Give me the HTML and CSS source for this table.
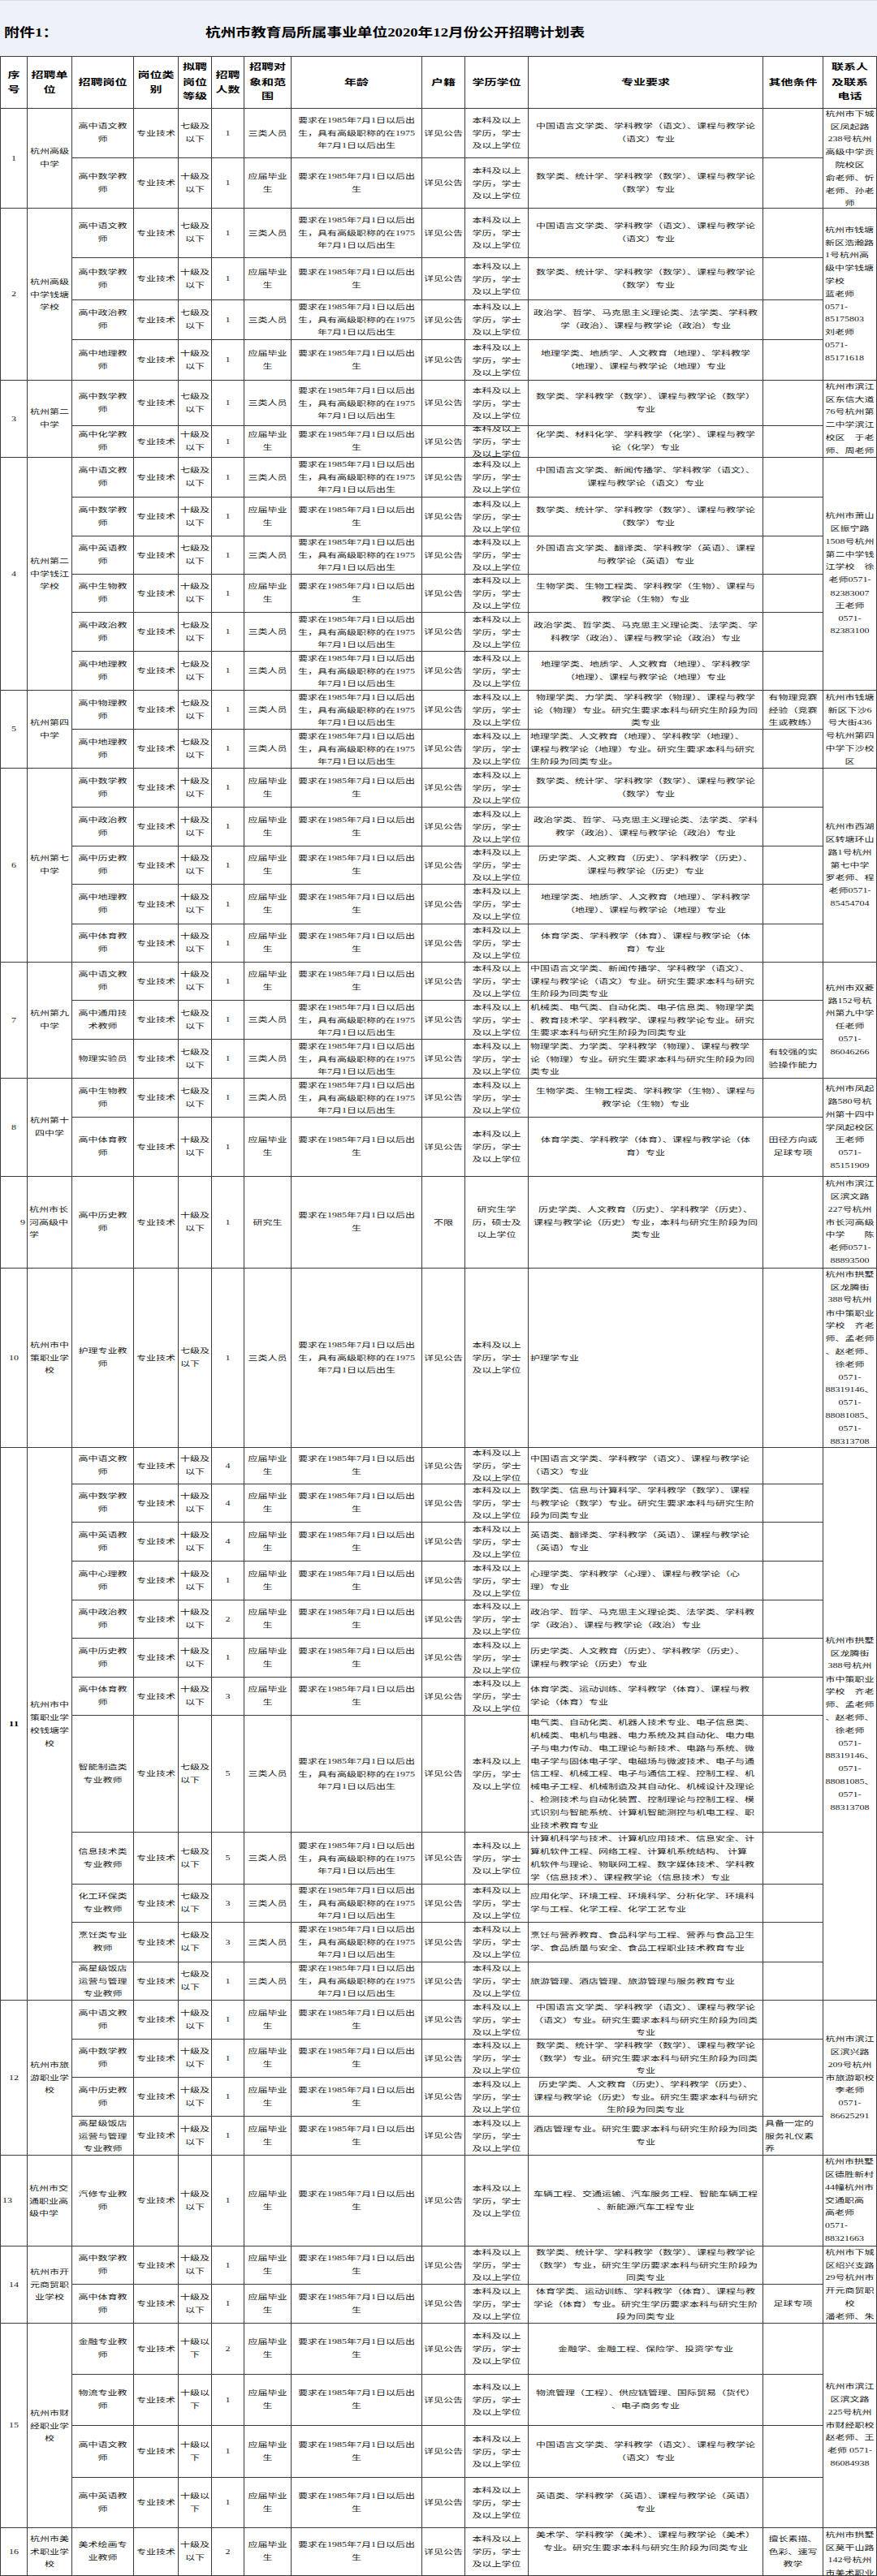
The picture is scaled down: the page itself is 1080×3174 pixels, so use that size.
FILE: index.html
```html
<!DOCTYPE html>
<html lang="zh-CN">
<head>
<meta charset="utf-8">
<title>杭州市教育局所属事业单位2020年12月份公开招聘计划表</title>
<link rel="stylesheet" href="styles.css">
</head>
<body>
<div class="page">
<div class="top"><span class="fj">附件1：</span><span class="ttl">杭州市教育局所属事业单位2020年12月份公开招聘计划表</span></div>
<div class="grid">
<div class="c hd"><span>序<br>号</span></div>
<div class="c hd"><span>招聘单<br>位</span></div>
<div class="c hd"><span>招聘岗位</span></div>
<div class="c hd"><span>岗位类<br>别</span></div>
<div class="c hd"><span>拟聘<br>岗位<br>等级</span></div>
<div class="c hd"><span>招聘<br>人数</span></div>
<div class="c hd"><span>招聘对<br>象和范<br>围</span></div>
<div class="c hd"><span>年龄</span></div>
<div class="c hd"><span>户籍</span></div>
<div class="c hd"><span>学历学位</span></div>
<div class="c hd"><span>专业要求</span></div>
<div class="c hd"><span>其他条件</span></div>
<div class="c hd"><span>联系人<br>及联系<br>电话</span></div>

<!-- 1 -->
<div class="c s2"><span>1</span></div>
<div class="c s2"><span>杭州高级<br>中学</span></div>
<div class="c"><span>高中语文教<br>师</span></div><div class="c"><span>专业技术</span></div><div class="c"><span>七级及<br>以下</span></div><div class="c"><span>1</span></div><div class="c"><span>三类人员</span></div><div class="c"><span>要求在1985年7月1日以后出<br>生，具有高级职称的在1975<br>年7月1日以后出生</span></div><div class="c"><span>详见公告</span></div><div class="c"><span>本科及以上<br>学历，学士<br>及以上学位</span></div><div class="c"><span>中国语言文学类、学科教学（语文）、课程与教学论<br>（语文）专业</span></div><div class="c"></div>
<div class="c s2"><span>杭州市下城<br>区凤起路<br>238号杭州<br>高级中学贡<br>院校区<br>俞老师、忻<br>老师、孙老<br>师</span></div>
<div class="c"><span>高中数学教<br>师</span></div><div class="c"><span>专业技术</span></div><div class="c"><span>十级及<br>以下</span></div><div class="c"><span>1</span></div><div class="c"><span>应届毕业<br>生</span></div><div class="c"><span>要求在1985年7月1日以后出<br>生</span></div><div class="c"><span>详见公告</span></div><div class="c"><span>本科及以上<br>学历，学士<br>及以上学位</span></div><div class="c"><span>数学类、统计学、学科教学（数学）、课程与教学论<br>（数学）专业</span></div><div class="c"></div>

<!-- 2 -->
<div class="c s4"><span>2</span></div>
<div class="c s4"><span>杭州高级<br>中学钱塘<br>学校</span></div>
<div class="c"><span>高中语文教<br>师</span></div><div class="c"><span>专业技术</span></div><div class="c"><span>七级及<br>以下</span></div><div class="c"><span>1</span></div><div class="c"><span>三类人员</span></div><div class="c"><span>要求在1985年7月1日以后出<br>生，具有高级职称的在1975<br>年7月1日以后出生</span></div><div class="c"><span>详见公告</span></div><div class="c"><span>本科及以上<br>学历，学士<br>及以上学位</span></div><div class="c"><span>中国语言文学类、学科教学（语文）、课程与教学论<br>（语文）专业</span></div><div class="c"></div>
<div class="c s4 l"><span>杭州市钱塘<br>新区浩瀚路<br>1号杭州高<br>级中学钱塘<br>学校<br>蓝老师<br>0571-<br>85175803<br>刘老师<br>0571-<br>85171618</span></div>
<div class="c"><span>高中数学教<br>师</span></div><div class="c"><span>专业技术</span></div><div class="c"><span>十级及<br>以下</span></div><div class="c"><span>1</span></div><div class="c"><span>应届毕业<br>生</span></div><div class="c"><span>要求在1985年7月1日以后出<br>生</span></div><div class="c"><span>详见公告</span></div><div class="c"><span>本科及以上<br>学历，学士<br>及以上学位</span></div><div class="c"><span>数学类、统计学、学科教学（数学）、课程与教学论<br>（数学）专业</span></div><div class="c"></div>
<div class="c"><span>高中政治教<br>师</span></div><div class="c"><span>专业技术</span></div><div class="c"><span>七级及<br>以下</span></div><div class="c"><span>1</span></div><div class="c"><span>三类人员</span></div><div class="c"><span>要求在1985年7月1日以后出<br>生，具有高级职称的在1975<br>年7月1日以后出生</span></div><div class="c"><span>详见公告</span></div><div class="c"><span>本科及以上<br>学历，学士<br>及以上学位</span></div><div class="c"><span>政治学、哲学、马克思主义理论类、法学类、学科教<br>学（政治）、课程与教学论（政治）专业</span></div><div class="c"></div>
<div class="c"><span>高中地理教<br>师</span></div><div class="c"><span>专业技术</span></div><div class="c"><span>十级及<br>以下</span></div><div class="c"><span>1</span></div><div class="c"><span>应届毕业<br>生</span></div><div class="c"><span>要求在1985年7月1日以后出<br>生</span></div><div class="c"><span>详见公告</span></div><div class="c"><span>本科及以上<br>学历，学士<br>及以上学位</span></div><div class="c"><span>地理学类、地质学、人文教育（地理）、学科教学<br>（地理）、课程与教学论（地理）专业</span></div><div class="c"></div>

<!-- 3 -->
<div class="c s2"><span>3</span></div>
<div class="c s2"><span>杭州第二<br>中学</span></div>
<div class="c"><span>高中数学教<br>师</span></div><div class="c"><span>专业技术</span></div><div class="c"><span>七级及<br>以下</span></div><div class="c"><span>1</span></div><div class="c"><span>三类人员</span></div><div class="c"><span>要求在1985年7月1日以后出<br>生，具有高级职称的在1975<br>年7月1日以后出生</span></div><div class="c"><span>详见公告</span></div><div class="c"><span>本科及以上<br>学历，学士<br>及以上学位</span></div><div class="c"><span>数学类、学科教学（数学）、课程与教学论（数学）<br>专业</span></div><div class="c"></div>
<div class="c s2"><span>杭州市滨江<br>区东信大道<br>76号杭州第<br>二中学滨江<br>校区　于老<br>师、周老师</span></div>
<div class="c"><span>高中化学教<br>师</span></div><div class="c"><span>专业技术</span></div><div class="c"><span>十级及<br>以下</span></div><div class="c"><span>1</span></div><div class="c"><span>应届毕业<br>生</span></div><div class="c"><span>要求在1985年7月1日以后出<br>生</span></div><div class="c"><span>详见公告</span></div><div class="c"><span>本科及以上<br>学历，学士<br>及以上学位</span></div><div class="c"><span>化学类、材料化学、学科教学（化学）、课程与教学<br>论（化学）专业</span></div><div class="c"></div>

<!-- 4 -->
<div class="c s6"><span>4</span></div>
<div class="c s6"><span>杭州第二<br>中学钱江<br>学校</span></div>
<div class="c"><span>高中语文教<br>师</span></div><div class="c"><span>专业技术</span></div><div class="c"><span>七级及<br>以下</span></div><div class="c"><span>1</span></div><div class="c"><span>三类人员</span></div><div class="c"><span>要求在1985年7月1日以后出<br>生，具有高级职称的在1975<br>年7月1日以后出生</span></div><div class="c"><span>详见公告</span></div><div class="c"><span>本科及以上<br>学历，学士<br>及以上学位</span></div><div class="c"><span>中国语言文学类、新闻传播学、学科教学（语文）、<br>课程与教学论（语文）专业</span></div><div class="c"></div>
<div class="c s6"><span>杭州市萧山<br>区振宁路<br>1508号杭州<br>第二中学钱<br>江学校　徐<br>老师0571-<br>82383007<br>王老师<br>0571-<br>82383100</span></div>
<div class="c"><span>高中数学教<br>师</span></div><div class="c"><span>专业技术</span></div><div class="c"><span>十级及<br>以下</span></div><div class="c"><span>1</span></div><div class="c"><span>应届毕业<br>生</span></div><div class="c"><span>要求在1985年7月1日以后出<br>生</span></div><div class="c"><span>详见公告</span></div><div class="c"><span>本科及以上<br>学历，学士<br>及以上学位</span></div><div class="c"><span>数学类、统计学、学科教学（数学）、课程与教学论<br>（数学）专业</span></div><div class="c"></div>
<div class="c"><span>高中英语教<br>师</span></div><div class="c"><span>专业技术</span></div><div class="c"><span>七级及<br>以下</span></div><div class="c"><span>1</span></div><div class="c"><span>三类人员</span></div><div class="c"><span>要求在1985年7月1日以后出<br>生，具有高级职称的在1975<br>年7月1日以后出生</span></div><div class="c"><span>详见公告</span></div><div class="c"><span>本科及以上<br>学历，学士<br>及以上学位</span></div><div class="c"><span>外国语言文学类、翻译类、学科教学（英语）、课程<br>与教学论（英语）专业</span></div><div class="c"></div>
<div class="c"><span>高中生物教<br>师</span></div><div class="c"><span>专业技术</span></div><div class="c"><span>十级及<br>以下</span></div><div class="c"><span>1</span></div><div class="c"><span>应届毕业<br>生</span></div><div class="c"><span>要求在1985年7月1日以后出<br>生</span></div><div class="c"><span>详见公告</span></div><div class="c"><span>本科及以上<br>学历，学士<br>及以上学位</span></div><div class="c"><span>生物学类、生物工程类、学科教学（生物）、课程与<br>教学论（生物）专业</span></div><div class="c"></div>
<div class="c"><span>高中政治教<br>师</span></div><div class="c"><span>专业技术</span></div><div class="c"><span>七级及<br>以下</span></div><div class="c"><span>1</span></div><div class="c"><span>三类人员</span></div><div class="c"><span>要求在1985年7月1日以后出<br>生，具有高级职称的在1975<br>年7月1日以后出生</span></div><div class="c"><span>详见公告</span></div><div class="c"><span>本科及以上<br>学历，学士<br>及以上学位</span></div><div class="c"><span>政治学类、哲学类、马克思主义理论类、法学类、学<br>科教学（政治）、课程与教学论（政治）专业</span></div><div class="c"></div>
<div class="c"><span>高中地理教<br>师</span></div><div class="c"><span>专业技术</span></div><div class="c"><span>七级及<br>以下</span></div><div class="c"><span>1</span></div><div class="c"><span>三类人员</span></div><div class="c"><span>要求在1985年7月1日以后出<br>生，具有高级职称的在1975<br>年7月1日以后出生</span></div><div class="c"><span>详见公告</span></div><div class="c"><span>本科及以上<br>学历，学士<br>及以上学位</span></div><div class="c"><span>地理学类、地质学、人文教育（地理）、学科教学<br>（地理）、课程与教学论（地理）专业</span></div><div class="c"></div>

<!-- 5 -->
<div class="c s2"><span>5</span></div>
<div class="c s2"><span>杭州第四<br>中学</span></div>
<div class="c"><span>高中物理教<br>师</span></div><div class="c"><span>专业技术</span></div><div class="c"><span>七级及<br>以下</span></div><div class="c"><span>1</span></div><div class="c"><span>三类人员</span></div><div class="c"><span>要求在1985年7月1日以后出<br>生，具有高级职称的在1975<br>年7月1日以后出生</span></div><div class="c"><span>详见公告</span></div><div class="c"><span>本科及以上<br>学历，学士<br>及以上学位</span></div><div class="c"><span>物理学类、力学类、学科教学（物理）、课程与教学<br>论（物理）专业。研究生要求本科与研究生阶段为同<br>类专业</span></div><div class="c"><span>有物理竞赛<br>经验（竞赛<br>生或教练）</span></div>
<div class="c s2"><span>杭州市钱塘<br>新区下沙6<br>号大街436<br>号杭州第四<br>中学下沙校<br>区</span></div>
<div class="c"><span>高中地理教<br>师</span></div><div class="c"><span>专业技术</span></div><div class="c"><span>七级及<br>以下</span></div><div class="c"><span>1</span></div><div class="c"><span>三类人员</span></div><div class="c"><span>要求在1985年7月1日以后出<br>生，具有高级职称的在1975<br>年7月1日以后出生</span></div><div class="c"><span>详见公告</span></div><div class="c"><span>本科及以上<br>学历，学士<br>及以上学位</span></div><div class="c l"><span>地理学类、人文教育（地理）、学科教学（地理）、<br>课程与教学论（地理）专业。研究生要求本科与研究<br>生阶段为同类专业。</span></div><div class="c"></div>

<!-- 6 -->
<div class="c s5"><span>6</span></div>
<div class="c s5"><span>杭州第七<br>中学</span></div>
<div class="c"><span>高中数学教<br>师</span></div><div class="c"><span>专业技术</span></div><div class="c"><span>十级及<br>以下</span></div><div class="c"><span>1</span></div><div class="c"><span>应届毕业<br>生</span></div><div class="c"><span>要求在1985年7月1日以后出<br>生</span></div><div class="c"><span>详见公告</span></div><div class="c"><span>本科及以上<br>学历，学士<br>及以上学位</span></div><div class="c"><span>数学类、统计学、学科教学（数学）、课程与教学论<br>（数学）专业</span></div><div class="c"></div>
<div class="c s5"><span>杭州市西湖<br>区转塘环山<br>路1号杭州<br>第七中学<br>罗老师、程<br>老师0571-<br>85454704</span></div>
<div class="c"><span>高中政治教<br>师</span></div><div class="c"><span>专业技术</span></div><div class="c"><span>十级及<br>以下</span></div><div class="c"><span>1</span></div><div class="c"><span>应届毕业<br>生</span></div><div class="c"><span>要求在1985年7月1日以后出<br>生</span></div><div class="c"><span>详见公告</span></div><div class="c"><span>本科及以上<br>学历，学士<br>及以上学位</span></div><div class="c"><span>政治学类、哲学、马克思主义理论类、法学类、学科<br>教学（政治）、课程与教学论（政治）专业</span></div><div class="c"></div>
<div class="c"><span>高中历史教<br>师</span></div><div class="c"><span>专业技术</span></div><div class="c"><span>十级及<br>以下</span></div><div class="c"><span>1</span></div><div class="c"><span>应届毕业<br>生</span></div><div class="c"><span>要求在1985年7月1日以后出<br>生</span></div><div class="c"><span>详见公告</span></div><div class="c"><span>本科及以上<br>学历，学士<br>及以上学位</span></div><div class="c"><span>历史学类、人文教育（历史）、学科教学（历史）、<br>课程与教学论（历史）专业</span></div><div class="c"></div>
<div class="c"><span>高中地理教<br>师</span></div><div class="c"><span>专业技术</span></div><div class="c"><span>十级及<br>以下</span></div><div class="c"><span>1</span></div><div class="c"><span>应届毕业<br>生</span></div><div class="c"><span>要求在1985年7月1日以后出<br>生</span></div><div class="c"><span>详见公告</span></div><div class="c"><span>本科及以上<br>学历，学士<br>及以上学位</span></div><div class="c"><span>地理学类、地质学、人文教育（地理）、学科教学<br>（地理）、课程与教学论（地理）专业</span></div><div class="c"></div>
<div class="c"><span>高中体育教<br>师</span></div><div class="c"><span>专业技术</span></div><div class="c"><span>十级及<br>以下</span></div><div class="c"><span>1</span></div><div class="c"><span>应届毕业<br>生</span></div><div class="c"><span>要求在1985年7月1日以后出<br>生</span></div><div class="c"><span>详见公告</span></div><div class="c"><span>本科及以上<br>学历，学士<br>及以上学位</span></div><div class="c"><span>体育学类、学科教学（体育）、课程与教学论（体<br>育）专业</span></div><div class="c"></div>

<!-- 7 -->
<div class="c s3"><span>7</span></div>
<div class="c s3"><span>杭州第九<br>中学</span></div>
<div class="c"><span>高中语文教<br>师</span></div><div class="c"><span>专业技术</span></div><div class="c"><span>十级及<br>以下</span></div><div class="c"><span>1</span></div><div class="c"><span>应届毕业<br>生</span></div><div class="c"><span>要求在1985年7月1日以后出<br>生</span></div><div class="c"><span>详见公告</span></div><div class="c"><span>本科及以上<br>学历，学士<br>及以上学位</span></div><div class="c l"><span>中国语言文学类、新闻传播学、学科教学（语文）、<br>课程与教学论（语文）专业。研究生要求本科与研究<br>生阶段为同类专业</span></div><div class="c"></div>
<div class="c s3"><span>杭州市双菱<br>路152号杭<br>州第九中学<br>任老师<br>0571-<br>86046266</span></div>
<div class="c"><span>高中通用技<br>术教师</span></div><div class="c"><span>专业技术</span></div><div class="c"><span>七级及<br>以下</span></div><div class="c"><span>1</span></div><div class="c"><span>三类人员</span></div><div class="c"><span>要求在1985年7月1日以后出<br>生，具有高级职称的在1975<br>年7月1日以后出生</span></div><div class="c"><span>详见公告</span></div><div class="c"><span>本科及以上<br>学历，学士<br>及以上学位</span></div><div class="c l"><span>机械类、电气类、自动化类、电子信息类、物理学类<br>、教育技术学、学科教学、课程与教学论专业。研究<br>生要求本科与研究生阶段为同类专业</span></div><div class="c"></div>
<div class="c"><span>物理实验员</span></div><div class="c"><span>专业技术</span></div><div class="c"><span>七级及<br>以下</span></div><div class="c"><span>1</span></div><div class="c"><span>三类人员</span></div><div class="c"><span>要求在1985年7月1日以后出<br>生，具有高级职称的在1975<br>年7月1日以后出生</span></div><div class="c"><span>详见公告</span></div><div class="c"><span>本科及以上<br>学历，学士<br>及以上学位</span></div><div class="c l"><span>物理学类、力学类、学科教学（物理）、课程与教学<br>论（物理）专业。研究生要求本科与研究生阶段为同<br>类专业</span></div><div class="c"><span>有较强的实<br>验操作能力</span></div>

<!-- 8 -->
<div class="c s2"><span>8</span></div>
<div class="c s2"><span>杭州第十<br>四中学</span></div>
<div class="c"><span>高中生物教<br>师</span></div><div class="c"><span>专业技术</span></div><div class="c"><span>七级及<br>以下</span></div><div class="c"><span>1</span></div><div class="c"><span>三类人员</span></div><div class="c"><span>要求在1985年7月1日以后出<br>生，具有高级职称的在1975<br>年7月1日以后出生</span></div><div class="c"><span>详见公告</span></div><div class="c"><span>本科及以上<br>学历，学士<br>及以上学位</span></div><div class="c"><span>生物学类、生物工程类、学科教学（生物）、课程与<br>教学论（生物）专业</span></div><div class="c"></div>
<div class="c s2"><span>杭州市凤起<br>路580号杭<br>州第十四中<br>学凤起校区<br>王老师<br>0571-<br>85151909</span></div>
<div class="c"><span>高中体育教<br>师</span></div><div class="c"><span>专业技术</span></div><div class="c"><span>十级及<br>以下</span></div><div class="c"><span>1</span></div><div class="c"><span>应届毕业<br>生</span></div><div class="c"><span>要求在1985年7月1日以后出<br>生</span></div><div class="c"><span>详见公告</span></div><div class="c"><span>本科及以上<br>学历，学士<br>及以上学位</span></div><div class="c"><span>体育学类、学科教学（体育）、课程与教学论（体<br>育）专业</span></div><div class="c"><span>田径方向或<br>足球专项</span></div>

<!-- 9 -->
<div class="c r"><span>9</span></div>
<div class="c l"><span>杭州市长<br>河高级中<br>学</span></div>
<div class="c"><span>高中历史教<br>师</span></div><div class="c"><span>专业技术</span></div><div class="c"><span>十级及<br>以下</span></div><div class="c"><span>1</span></div><div class="c"><span>研究生</span></div><div class="c"><span>要求在1985年7月1日以后出<br>生</span></div><div class="c"><span>不限</span></div><div class="c"><span>研究生学<br>历，硕士及<br>以上学位</span></div><div class="c"><span>历史学类、人文教育（历史）、学科教学（历史）、<br>课程与教学论（历史）专业，本科与研究生阶段为同<br>类专业</span></div><div class="c"></div>
<div class="c"><span>杭州市滨江<br>区滨文路<br>227号杭州<br>市长河高级<br>中学　　陈<br>老师0571-<br>88893500</span></div>

<!-- 10 -->
<div class="c"><span>10</span></div>
<div class="c"><span>杭州市中<br>策职业学<br>校</span></div>
<div class="c"><span>护理专业教<br>师</span></div><div class="c"><span>专业技术</span></div><div class="c"><span class="tl">七级及<br>以下</span></div><div class="c"><span>1</span></div><div class="c"><span>三类人员</span></div><div class="c"><span>要求在1985年7月1日以后出<br>生，具有高级职称的在1975<br>年7月1日以后出生</span></div><div class="c"><span>详见公告</span></div><div class="c"><span>本科及以上<br>学历，学士<br>及以上学位</span></div><div class="c l"><span>护理学专业</span></div><div class="c"></div>
<div class="c"><span>杭州市拱墅<br>区龙腾街<br>388号杭州<br>市中策职业<br>学校　齐老<br>师、孟老师<br>、赵老师、<br>徐老师<br>0571-<br>88319146、<br>0571-<br>88081085、<br>0571-<br>88313708</span></div>

<!-- 11 -->
<div class="c s12 b"><span>11</span></div>
<div class="c s12"><span>杭州市中<br>策职业学<br>校钱塘学<br>校</span></div>
<div class="c"><span>高中语文教<br>师</span></div><div class="c"><span>专业技术</span></div><div class="c"><span>十级及<br>以下</span></div><div class="c"><span>4</span></div><div class="c"><span>应届毕业<br>生</span></div><div class="c"><span>要求在1985年7月1日以后出<br>生</span></div><div class="c"><span>详见公告</span></div><div class="c"><span>本科及以上<br>学历，学士<br>及以上学位</span></div><div class="c l"><span>中国语言文学类、学科教学（语文）、课程与教学论<br>（语文）专业</span></div><div class="c"></div>
<div class="c s12"><span>杭州市拱墅<br>区龙腾街<br>388号杭州<br>市中策职业<br>学校　齐老<br>师、孟老师<br>、赵老师、<br>徐老师<br>0571-<br>88319146、<br>0571-<br>88081085、<br>0571-<br>88313708</span></div>
<div class="c"><span>高中数学教<br>师</span></div><div class="c"><span>专业技术</span></div><div class="c"><span>十级及<br>以下</span></div><div class="c"><span>4</span></div><div class="c"><span>应届毕业<br>生</span></div><div class="c"><span>要求在1985年7月1日以后出<br>生</span></div><div class="c"><span>详见公告</span></div><div class="c"><span>本科及以上<br>学历，学士<br>及以上学位</span></div><div class="c l"><span>数学类、信息与计算科学、学科教学（数学）、课程<br>与教学论（数学）专业。研究生要求本科与研究生阶<br>段为同类专业</span></div><div class="c"></div>
<div class="c"><span>高中英语教<br>师</span></div><div class="c"><span>专业技术</span></div><div class="c"><span>十级及<br>以下</span></div><div class="c"><span>4</span></div><div class="c"><span>应届毕业<br>生</span></div><div class="c"><span>要求在1985年7月1日以后出<br>生</span></div><div class="c"><span>详见公告</span></div><div class="c"><span>本科及以上<br>学历，学士<br>及以上学位</span></div><div class="c l"><span>英语类、翻译类、学科教学（英语）、课程与教学论<br>（英语）专业</span></div><div class="c"></div>
<div class="c"><span>高中心理教<br>师</span></div><div class="c"><span>专业技术</span></div><div class="c"><span>十级及<br>以下</span></div><div class="c"><span>1</span></div><div class="c"><span>应届毕业<br>生</span></div><div class="c"><span>要求在1985年7月1日以后出<br>生</span></div><div class="c"><span>详见公告</span></div><div class="c"><span>本科及以上<br>学历，学士<br>及以上学位</span></div><div class="c l"><span>心理学类、学科教学（心理）、课程与教学论（心<br>理）专业</span></div><div class="c"></div>
<div class="c"><span>高中政治教<br>师</span></div><div class="c"><span>专业技术</span></div><div class="c"><span>十级及<br>以下</span></div><div class="c"><span>2</span></div><div class="c"><span>应届毕业<br>生</span></div><div class="c"><span>要求在1985年7月1日以后出<br>生</span></div><div class="c"><span>详见公告</span></div><div class="c"><span>本科及以上<br>学历，学士<br>及以上学位</span></div><div class="c l"><span>政治学、哲学、马克思主义理论类、法学类、学科教<br>学（政治）、课程与教学论（政治）专业</span></div><div class="c"></div>
<div class="c"><span>高中历史教<br>师</span></div><div class="c"><span>专业技术</span></div><div class="c"><span>十级及<br>以下</span></div><div class="c"><span>1</span></div><div class="c"><span>应届毕业<br>生</span></div><div class="c"><span>要求在1985年7月1日以后出<br>生</span></div><div class="c"><span>详见公告</span></div><div class="c"><span>本科及以上<br>学历，学士<br>及以上学位</span></div><div class="c l"><span>历史学类、人文教育（历史）、学科教学（历史）、<br>课程与教学论（历史）专业</span></div><div class="c"></div>
<div class="c"><span>高中体育教<br>师</span></div><div class="c"><span>专业技术</span></div><div class="c"><span>十级及<br>以下</span></div><div class="c"><span>3</span></div><div class="c"><span>应届毕业<br>生</span></div><div class="c"><span>要求在1985年7月1日以后出<br>生</span></div><div class="c"><span>详见公告</span></div><div class="c"><span>本科及以上<br>学历，学士<br>及以上学位</span></div><div class="c l"><span>体育学类、运动训练、学科教学（体育）、课程与教<br>学论（体育）专业</span></div><div class="c"></div>
<div class="c"><span>智能制造类<br>专业教师</span></div><div class="c"><span>专业技术</span></div><div class="c"><span class="tl">七级及<br>以下</span></div><div class="c"><span>5</span></div><div class="c"><span>三类人员</span></div><div class="c"><span>要求在1985年7月1日以后出<br>生，具有高级职称的在1975<br>年7月1日以后出生</span></div><div class="c"><span>详见公告</span></div><div class="c"><span>本科及以上<br>学历，学士<br>及以上学位</span></div><div class="c l"><span>电气类、自动化类、机器人技术专业、电子信息类、<br>机械类、电机与电器、电力系统及其自动化、电力电<br>子与电力传动、电工理论与新技术、电路与系统、微<br>电子学与固体电子学、电磁场与微波技术、电子与通<br>信工程、机械工程、电子与通信工程、控制工程、机<br>械电子工程、机械制造及其自动化、机械设计及理论<br>、检测技术与自动化装置、控制理论与控制工程、模<br>式识别与智能系统、计算机智能测控与机电工程、职<br>业技术教育专业</span></div><div class="c"></div>
<div class="c"><span>信息技术类<br>专业教师</span></div><div class="c"><span>专业技术</span></div><div class="c"><span class="tl">七级及<br>以下</span></div><div class="c"><span>5</span></div><div class="c"><span>三类人员</span></div><div class="c"><span>要求在1985年7月1日以后出<br>生，具有高级职称的在1975<br>年7月1日以后出生</span></div><div class="c"><span>详见公告</span></div><div class="c"><span>本科及以上<br>学历，学士<br>及以上学位</span></div><div class="c l"><span>计算机科学与技术、计算机应用技术、信息安全、计<br>算机软件工程、网络工程、计算机系统结构、 计算<br>机软件与理论、物联网工程、数字媒体技术、学科教<br>学（信息技术）、课程教学论（信息技术）专业</span></div><div class="c"></div>
<div class="c"><span>化工环保类<br>专业教师</span></div><div class="c"><span>专业技术</span></div><div class="c"><span class="tl">七级及<br>以下</span></div><div class="c"><span>3</span></div><div class="c"><span>三类人员</span></div><div class="c"><span>要求在1985年7月1日以后出<br>生，具有高级职称的在1975<br>年7月1日以后出生</span></div><div class="c"><span>详见公告</span></div><div class="c"><span>本科及以上<br>学历，学士<br>及以上学位</span></div><div class="c l"><span>应用化学、环境工程、环境科学、分析化学、环境科<br>学与工程、化学工程、化学工艺专业</span></div><div class="c"></div>
<div class="c"><span>烹饪类专业<br>教师</span></div><div class="c"><span>专业技术</span></div><div class="c"><span class="tl">七级及<br>以下</span></div><div class="c"><span>3</span></div><div class="c"><span>三类人员</span></div><div class="c"><span>要求在1985年7月1日以后出<br>生，具有高级职称的在1975<br>年7月1日以后出生</span></div><div class="c"><span>详见公告</span></div><div class="c"><span>本科及以上<br>学历，学士<br>及以上学位</span></div><div class="c l"><span>烹饪与营养教育、食品科学与工程、营养与食品卫生<br>学、食品质量与安全、食品工程职业技术教育专业</span></div><div class="c"></div>
<div class="c"><span>高星级饭店<br>运营与管理<br>专业教师</span></div><div class="c"><span>专业技术</span></div><div class="c"><span class="tl">七级及<br>以下</span></div><div class="c"><span>1</span></div><div class="c"><span>三类人员</span></div><div class="c"><span>要求在1985年7月1日以后出<br>生，具有高级职称的在1975<br>年7月1日以后出生</span></div><div class="c"><span>详见公告</span></div><div class="c"><span>本科及以上<br>学历，学士<br>及以上学位</span></div><div class="c l"><span>旅游管理、酒店管理、旅游管理与服务教育专业</span></div><div class="c"></div>

<!-- 12 -->
<div class="c s4"><span>12</span></div>
<div class="c s4"><span>杭州市旅<br>游职业学<br>校</span></div>
<div class="c"><span>高中语文教<br>师</span></div><div class="c"><span>专业技术</span></div><div class="c"><span>十级及<br>以下</span></div><div class="c"><span>1</span></div><div class="c"><span>应届毕业<br>生</span></div><div class="c"><span>要求在1985年7月1日以后出<br>生</span></div><div class="c"><span>详见公告</span></div><div class="c"><span>本科及以上<br>学历，学士<br>及以上学位</span></div><div class="c"><span>中国语言文学类、学科教学（语文）、课程与教学论<br>（语文）专业。研究生要求本科与研究生阶段为同类<br>专业</span></div><div class="c"></div>
<div class="c s4"><span>杭州市滨江<br>区滨兴路<br>209号杭州<br>市旅游职校<br>李老师<br>0571-<br>86625291</span></div>
<div class="c"><span>高中数学教<br>师</span></div><div class="c"><span>专业技术</span></div><div class="c"><span>十级及<br>以下</span></div><div class="c"><span>1</span></div><div class="c"><span>应届毕业<br>生</span></div><div class="c"><span>要求在1985年7月1日以后出<br>生</span></div><div class="c"><span>详见公告</span></div><div class="c"><span>本科及以上<br>学历，学士<br>及以上学位</span></div><div class="c"><span>数学类、统计学、学科教学（数学）、课程与教学论<br>（数学）专业。研究生要求本科与研究生阶段为同类<br>专业</span></div><div class="c"></div>
<div class="c"><span>高中历史教<br>师</span></div><div class="c"><span>专业技术</span></div><div class="c"><span>十级及<br>以下</span></div><div class="c"><span>1</span></div><div class="c"><span>应届毕业<br>生</span></div><div class="c"><span>要求在1985年7月1日以后出<br>生</span></div><div class="c"><span>详见公告</span></div><div class="c"><span>本科及以上<br>学历，学士<br>及以上学位</span></div><div class="c"><span>历史学类、人文教育（历史）、学科教学（历史）、<br>课程与教学论（历史）专业。研究生要求本科与研究<br>生阶段为同类专业</span></div><div class="c"></div>
<div class="c"><span>高星级饭店<br>运营与管理<br>专业教师</span></div><div class="c"><span>专业技术</span></div><div class="c"><span>十级及<br>以下</span></div><div class="c"><span>1</span></div><div class="c"><span>应届毕业<br>生</span></div><div class="c"><span>要求在1985年7月1日以后出<br>生</span></div><div class="c"><span>详见公告</span></div><div class="c"><span>本科及以上<br>学历，学士<br>及以上学位</span></div><div class="c"><span>酒店管理专业。研究生要求本科与研究生阶段为同类<br>专业</span></div><div class="c l"><span>具备一定的<br>服务礼仪素<br>养</span></div>

<!-- 13 -->
<div class="c l"><span>13</span></div>
<div class="c l"><span>杭州市交<br>通职业高<br>级中学</span></div>
<div class="c"><span>汽修专业教<br>师</span></div><div class="c"><span>专业技术</span></div><div class="c"><span>十级及<br>以下</span></div><div class="c"><span>1</span></div><div class="c"><span>应届毕业<br>生</span></div><div class="c"><span>要求在1985年7月1日以后出<br>生</span></div><div class="c"><span>详见公告</span></div><div class="c"><span>本科及以上<br>学历，学士<br>及以上学位</span></div><div class="c"><span>车辆工程、交通运输、汽车服务工程、智能车辆工程<br>、新能源汽车工程专业</span></div><div class="c"></div>
<div class="c l"><span>杭州市拱墅<br>区德胜新村<br>44幢杭州市<br>交通职高<br>高老师<br>0571-<br>88321663</span></div>

<!-- 14 -->
<div class="c s2"><span>14</span></div>
<div class="c s2"><span>杭州市开<br>元商贸职<br>业学校</span></div>
<div class="c"><span>高中数学教<br>师</span></div><div class="c"><span>专业技术</span></div><div class="c"><span>十级及<br>以下</span></div><div class="c"><span>1</span></div><div class="c"><span>应届毕业<br>生</span></div><div class="c"><span>要求在1985年7月1日以后出<br>生</span></div><div class="c"><span>详见公告</span></div><div class="c"><span>本科及以上<br>学历，学士<br>及以上学位</span></div><div class="c"><span>数学类、统计学、学科教学（数学）、课程与教学论<br>（数学）专业，研究生学历要求本科与研究生阶段为<br>同类专业</span></div><div class="c"></div>
<div class="c s2"><span>杭州市下城<br>区绍兴支路<br>29号杭州市<br>开元商贸职<br>校<br>潘老师、朱</span></div>
<div class="c"><span>高中体育教<br>师</span></div><div class="c"><span>专业技术</span></div><div class="c"><span>十级及<br>以下</span></div><div class="c"><span>1</span></div><div class="c"><span>应届毕业<br>生</span></div><div class="c"><span>要求在1985年7月1日以后出<br>生</span></div><div class="c"><span>详见公告</span></div><div class="c"><span>本科及以上<br>学历，学士<br>及以上学位</span></div><div class="c"><span>体育学类、运动训练、学科教学（体育）、课程与教<br>学论（体育）专业。研究生学历要求本科与研究生阶<br>段为同类专业</span></div><div class="c"><span>足球专项</span></div>

<!-- 15 -->
<div class="c s4"><span>15</span></div>
<div class="c s4"><span>杭州市财<br>经职业学<br>校</span></div>
<div class="c"><span>金融专业教<br>师</span></div><div class="c"><span>专业技术</span></div><div class="c"><span>十级以<br>下</span></div><div class="c"><span>2</span></div><div class="c"><span>应届毕业<br>生</span></div><div class="c"><span>要求在1985年7月1日以后出<br>生</span></div><div class="c"><span>详见公告</span></div><div class="c"><span>本科及以上<br>学历，学士<br>及以上学位</span></div><div class="c"><span>金融学、金融工程、保险学、投资学专业</span></div><div class="c"></div>
<div class="c s4"><span>杭州市滨江<br>区滨文路<br>225号杭州<br>市财经职校<br>赵老师、王<br>老师 0571-<br>86084938</span></div>
<div class="c"><span>物流专业教<br>师</span></div><div class="c"><span>专业技术</span></div><div class="c"><span>十级以<br>下</span></div><div class="c"><span>1</span></div><div class="c"><span>应届毕业<br>生</span></div><div class="c"><span>要求在1985年7月1日以后出<br>生</span></div><div class="c"><span>详见公告</span></div><div class="c"><span>本科及以上<br>学历，学士<br>及以上学位</span></div><div class="c"><span>物流管理（工程）、供应链管理、国际贸易（货代）<br>、电子商务专业</span></div><div class="c"></div>
<div class="c"><span>高中语文教<br>师</span></div><div class="c"><span>专业技术</span></div><div class="c"><span>十级以<br>下</span></div><div class="c"><span>1</span></div><div class="c"><span>应届毕业<br>生</span></div><div class="c"><span>要求在1985年7月1日以后出<br>生</span></div><div class="c"><span>详见公告</span></div><div class="c"><span>本科及以上<br>学历，学士<br>及以上学位</span></div><div class="c"><span>中国语言文学类、学科教学（语文）、课程与教学论<br>（语文）专业</span></div><div class="c"></div>
<div class="c"><span>高中英语教<br>师</span></div><div class="c"><span>专业技术</span></div><div class="c"><span>十级以<br>下</span></div><div class="c"><span>1</span></div><div class="c"><span>应届毕业<br>生</span></div><div class="c"><span>要求在1985年7月1日以后出<br>生</span></div><div class="c"><span>详见公告</span></div><div class="c"><span>本科及以上<br>学历，学士<br>及以上学位</span></div><div class="c"><span>英语类、学科教学（英语）、课程与教学论（英语）<br>专业</span></div><div class="c"></div>

<!-- 16 -->
<div class="c"><span>16</span></div>
<div class="c"><span>杭州市美<br>术职业学<br>校</span></div>
<div class="c"><span>美术绘画专<br>业教师</span></div><div class="c"><span>专业技术</span></div><div class="c"><span>十级及<br>以下</span></div><div class="c"><span>2</span></div><div class="c"><span>应届毕业<br>生</span></div><div class="c"><span>要求在1985年7月1日以后出<br>生</span></div><div class="c"><span>详见公告</span></div><div class="c"><span>本科及以上<br>学历，学士<br>及以上学位</span></div><div class="c t"><span>美术学、学科教学（美术）、课程与教学论（美术）<br>专业。研究生要求本科与研究生阶段为同类专业</span></div><div class="c"><span>擅长素描、<br>色彩、速写<br>教学</span></div>
<div class="c t"><span>杭州市拱墅<br>区莫干山路<br>142号杭州<br>市美术职业<br>学校</span></div>
</div>
</div>
</body>
</html>
```

FILE: styles.css
```css
html, body {
  margin: 0;
  padding: 0;
  background: #ffffff;
}

body {
  font-family: "Liberation Serif", "Noto Sans CJK SC", serif;
  color: #161616;
}

.page {
  width: 1080px;
}

.top {
  height: 69px;
  box-sizing: border-box;
  padding: 6px 0 0 5px;
  background: #eef1f8;
  border-top: 1px solid #d6dbe6;
  display: flex;
  align-items: center;
}

.fj {
  display: inline-block;
  width: 248px;
  font-size: 19px;
  font-weight: bold;
  color: #000;
  transform: scaleY(0.8);
}

.ttl {
  display: inline-block;
  font-size: 18.7px;
  font-weight: bold;
  color: #000;
  white-space: nowrap;
  transform: scaleY(0.8);
}

.grid {
  display: grid;
  grid-template-columns: 32px 54px 75px 54px 40px 39px 57px 160px 52px 77px 288px 73px 65px;
  grid-template-rows:
    63px
    60px 61px
    60px 51px 48px 49px
    55px 38px
    48px 47px 46px 46px 47px 47px
    47px 47px
    47px 47px 46px 48px 46px
    46px 47px 47px
    47px 72px
    112px
    220px
    44px 46px 47px 47px 46px 47px 46px 143px 63px 46px 48px 46px
    47px 46px 47px 47px
    111px
    46px 47px
    62px 62px 63px 61px
    58px;
  gap: 1px;
  padding: 1px;
  background: #3c3c3c;
}

.c {
  background: #ffffff;
  display: flex;
  align-items: center;
  justify-content: center;
  overflow: hidden;
  min-width: 0;
  min-height: 0;
}

.c > span {
  display: block;
  flex: none;
  white-space: nowrap;
  text-align: center;
  font-size: 12px;
  line-height: 22.6px;
  transform: scaleY(0.7);
}

.c > span.tl {
  text-align: left;
}

.c.l {
  justify-content: flex-start;
  padding-left: 2px;
}

.c.l > span {
  text-align: left;
}

.c.r {
  justify-content: flex-end;
  padding-right: 2px;
}

.c.t {
  align-items: flex-start;
}

.c.t > span {
  transform-origin: top center;
}

.c.b > span {
  font-size: 13px;
  font-weight: bold;
  color: #000;
}

.hd > span {
  font-size: 15px;
  font-weight: bold;
  line-height: 25.7px;
  color: #000;
}

.s2 { grid-row: span 2; }
.s3 { grid-row: span 3; }
.s4 { grid-row: span 4; }
.s5 { grid-row: span 5; }
.s6 { grid-row: span 6; }
.s12 { grid-row: span 12; }
```
